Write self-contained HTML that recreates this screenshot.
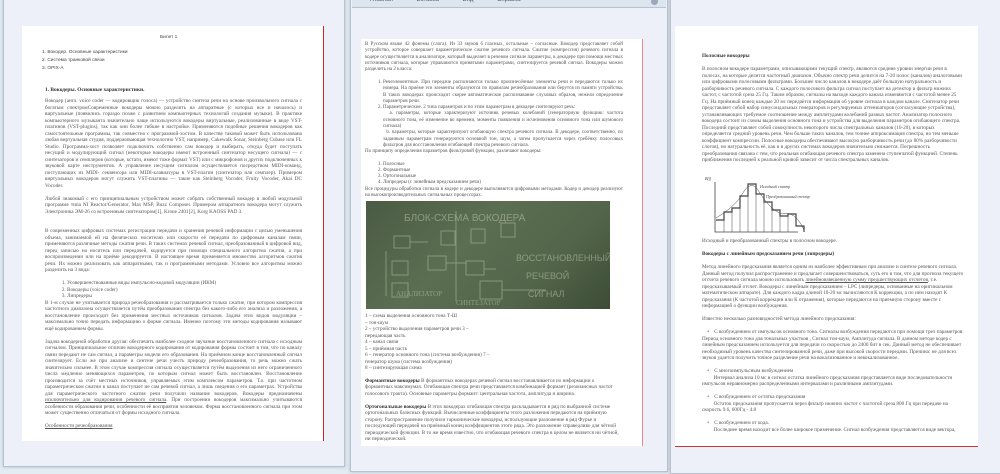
<!DOCTYPE html>
<html><head><meta charset="utf-8">
<style>
*{margin:0;padding:0;box-sizing:border-box}
body{width:1000px;height:470px;overflow:hidden;background:#e3ebf3;position:relative;font-family:"Liberation Serif","Noto Serif CJK SC",serif;color:#555}
.win{position:absolute;background:#edf0f8;border:1px solid #b9c3cf;box-shadow:0 0 3px rgba(120,140,160,.5)}
.page{position:absolute;background:#fff}
.t{position:absolute;font-size:5.2px;line-height:6.5px;text-align:justify;color:#555}
.t p{margin-bottom:6.5px}
.s{font-family:"Liberation Sans",sans-serif;font-size:4.8px;line-height:8px;color:#444}
b{color:#333}
ol,ul{padding-left:14px}
</style></head><body>

<!-- left window -->
<div class="win" style="left:3px;top:-4px;width:342px;height:471px"></div>
<div class="page" style="left:22px;top:26px;width:302px;height:415px;border-right:1.5px solid #c22"></div>
<div class="t s" style="left:160px;top:34px">Билет 1</div>
<div class="t s" style="left:42px;top:49px">1. Вокодер. Основные характеристики<br>2. Система транковой связи<br>3. OPIX-A</div>
<div class="t" style="left:45px;top:87px;font-weight:bold;color:#333;font-size:5.4px">1. Вокодеры. Основные характеристики.</div>
<div class="t" style="left:45px;top:98px;width:257px">
<p>Вокодер (англ. voice coder — кодировщик голоса) — устройство синтеза речи на основе произвольного сигнала с богатым спектромСовременные вокодеры можно разделить на аппаратные (с которых все и началось) и виртуальные (появились гораздо позже с развитием компьютерных технологий создания музыки). В практике компьютерного музыканта значительно чаще используются вокодеры виртуальные, реализованные в виде VST-плагинов (VST-plugins), так как они более гибкие в настройке. Применяются подобные решения вокодеров как самостоятельные программы, так совместно с программой-хостом. В качестве таковой может быть использована любая виртуальная студия, поддерживающая технологию VST, например, Cakewalk Sonar, Steinberg Cubase или FL Studio. Программа-хост позволяет подключить собственно сам вокодер и выбирать, откуда будет поступать несущий и модулирующий сигнал (некоторые вокодеры имеют встроенный синтезатор несущего сигнала) — с синтезаторов и семплеров (которые, кстати, имеют тоже формат VST) или с микрофонов и других подключенных к звуковой карте инструментов. А управление несущим сигналом осуществляется посредством MIDI-команд, поступающих из MIDI- секвенсора или MIDI-клавиатуры в VST-плагин (синтезатор или семплер). Примером виртуальных вокодеров могут служить VST-плагины — такие как Steinberg Vocoder, Fruity Vocoder, Akai DC Vocoder.</p>
<p>Любой знакомый с его принципиальным устройством может собрать собственный вокодер в любой модульной программе типа NI Reactor/Generator, Max MSP, Buzz Composer. Примером аппаратного вокодера могут служить Электроника ЭМ-26 со встроенным синтезатором[1], Krone 2401[2], Korg KAOSS PAD 3.</p>
<p style="margin-top:13px">В современных цифровых системах регистрации передачи и хранения речевой информации с целью уменьшения объема, занимаемой ей на физических носителях или скорости её передачи по цифровым каналам связи, применяются различные методы сжатия речи. В таких системах речевой сигнал, преобразованный в цифровой вид, перед записью на носитель или передачей, кодируется при помощи специального алгоритма сжатия, а при воспроизведении или на приёме декодируется. В настоящее время применяется множество алгоритмов сжатия речи. Их можно реализовать как аппаратными, так и программными методами. Условно все алгоритмы можно разделить на 3 вида:</p>
<ol style="padding-left:22px;margin-bottom:0"><li>Усовершенствованные виды импульсно-кодовой модуляции (ИКМ)</li><li>Вокодеры (voice coder)</li><li>Липредеры</li></ol>
<p>В 1-м случае не учитывается природа речеобразования и рассматривается только сжатие, при котором компрессия частотного диапазона осуществляется путём преобразования спектра без какого-либо его анализа и разложения, а восстановление происходит без применения местных источников сигналов. Задача этих видов модуляции – максимально точно передать информацию о форме сигнала. Именно поэтому эти методы кодирования называют ещё кодированием формы.</p>
<p>Задача вокодерной обработки другая: обеспечить наиболее сходное звучание восстановленного сигнала с исходным сигналом. Принципиальное отличие вокодерного кодирования от кодирования формы состоит в том, что по каналу связи передают не сам сигнал, а параметры модели его образования. На приёмном конце восстановленный сигнал синтезирует. Если же при анализе и синтезе речи учесть природу речеобразования, то речь можно сжать значительно сильнее. В этом случае компрессия сигнала осуществляется путём выделения из него ограниченного числа медленно меняющихся параметров, по которым сигнал может быть восстановлен. Восстановление производится за счёт местных источников, управляемых этим комплексом параметров. Т.о. при частотном параметрическом сжатии в канал поступает не сам речевой сигнал, а лишь сведения о его параметрах. Устройства для параметрического частотного сжатия речи получили название вокодеров. Вокодеры предназначены <u>исключительно для кодирования речевого сигнала</u>. При построении вокодеров максимально учитываются особенности образования речи, особенности её восприятия человеком. Форма восстановленного сигнала при этом может существенно отличаться от формы исходного сигнала.</p>
<p><u>Особенности речеобразования</u></p>
</div>

<!-- middle window -->
<div class="win" style="left:350px;top:-6px;width:318px;height:478px;background:#edf0f8"></div>
<div style="position:absolute;left:352px;top:-6px;width:314px;height:14px;background:#dde5ef;border-bottom:1px solid #b9c3cf"></div>
<div class="s" style="position:absolute;left:370px;top:-4px;font-size:6px;color:#556;word-spacing:22px">Главная Вставка Вид Справка</div>
<div style="position:absolute;left:651px;top:-2px;width:7px;height:7px;border-radius:50%;background:#9aa8b8"></div>
<div class="page" style="left:361px;top:39px;width:282px;height:407px;border-right:1.5px solid #e88"></div>
<div class="t" style="left:365px;top:42px;width:258px;font-size:5px;line-height:6.3px">
<p>В Русском языке 42 фонемы (слога). Из 33 звуков 6 гласных, остальные – согласные. Вокодер представляет собой устройство, которое совершает параметрическое сжатие речевого сигнала. Сжатие (компрессия) речевого сигнала в кодере осуществляется в анализаторе, который выделяет в речевом сигнале параметры, в декодере при помощи местных источников сигнала, которые управляются принятыми параметрами, синтезируется речевой сигнал. Вокодеры можно разделить на 2 класса:</p>
<ol style="padding-left:18px;margin-bottom:0"><li>Речеэлементные. При передаче распознаются только произнесённые элементы речи и передаются только их номера. На приёме эти элементы образуются по правилам речеобразования или берутся из памяти устройства. В таких вокодерах происходит скорее автоматическое распознавание слуховых образов, нежели определение параметров речи.</li><li>Параметрические. 2 типа параметров и по этим параметрам в декодере синтезируют речь:<br>&nbsp;&nbsp;a. параметры, которые характеризуют источник речевых колебаний (генераторную функцию: частота основного тона, её изменение во времени, моменты появления и исчезновения основного тона или шумового сигнала)<br>&nbsp;&nbsp;b. параметры, которые характеризуют огибающую спектра речевого сигнала. В декодере, соответственно, по заданным параметрам генерируются основной тон, шум, а затем пропускается через гребёнку полосовых фильтров для восстановления огибающей спектра речевого сигнала.</li></ol>
По принципу определения параметров фильтровой функции, различают вокодеры:
<ol style="padding-left:18px;margin-top:6px"><li>Полосные</li><li>Формантные</li><li>Ортогональные</li><li>Липредеры (с линейным предсказанием речи)</li></ol>
Все процедуры обработки сигнала в кодере и декодере выполняются цифровыми методами. Кодер и декодер реализуют на высокопроизводительных сигнальных процессорах.
</div>
<div style="position:absolute;left:366px;top:201px;width:244px;height:108px;background:linear-gradient(135deg,#4a5b43,#5b6e52 40%,#53654a 70%,#3c4c36);overflow:hidden">
<svg width="244" height="108" style="position:absolute;left:0;top:0" stroke="#a9b69a" fill="none" stroke-width="1" opacity=".6">
<text x="38" y="20" fill="#b4bfa4" stroke="none" font-size="10" font-family="Liberation Sans">БЛОК-СХЕМА ВОКОДЕРА</text>
<rect x="28" y="35" width="16" height="12"/><rect x="75" y="30" width="14" height="14"/><rect x="105" y="28" width="14" height="14"/><rect x="135" y="22" width="14" height="14"/>
<rect x="26" y="60" width="16" height="14"/><rect x="62" y="55" width="18" height="14"/><rect x="26" y="82" width="16" height="14"/>
<rect x="100" y="60" width="18" height="14"/><rect x="114" y="80" width="22" height="18"/>
<path d="M90 10 V100 M44 41 H62 M80 62 H100 M118 68 H130 M136 89 H180 M20 50 V95"/>
<text x="150" y="60" fill="#b4bfa4" stroke="none" font-size="9" font-family="Liberation Sans">ВОССТАНОВЛЕННЫЙ</text>
<text x="160" y="78" fill="#b4bfa4" stroke="none" font-size="9" font-family="Liberation Sans">РЕЧЕВОЙ</text>
<text x="162" y="96" fill="#b4bfa4" stroke="none" font-size="9" font-family="Liberation Sans">СИГНАЛ</text>
<text x="30" y="95" fill="#b4bfa4" stroke="none" font-size="7">АНАЛИЗАТОР</text><text x="90" y="104" fill="#b4bfa4" stroke="none" font-size="7">СИНТЕЗАТОР</text>
</svg></div>
<div class="t" style="left:365px;top:313px;width:258px;text-align:left">
1 – схема выделения основного тона Т-Ш<br>– тон-шум<br>2 – устройство выделения параметров речи 3 –<br>передающая часть<br>4 – канал связи<br>5 – приёмная часть<br>6 – генератор основного тона (система возбуждения) 7 –<br>генератор шума (система возбуждения)<br>8 – синтезирующая схема
<p style="margin-top:6px"><b>Формантные вокодеры</b> В формантных вокодерах речевой сигнал восстанавливается по информации о формантных максимумах. Огибающая спектра речи представляется комбинацией формант (резонансных частот голосового тракта). Основные параметры формант: центральная частота, амплитуда и ширина.</p>
<p><b>Ортогональные вокодеры</b> В этих вокодерах огибающая спектра раскладывается в ряд по выбранной системе ортогональных базисных функций. Вычисленные коэффициенты этого разложения передаются на приёмную сторону. Распространение получили гармонические вокодеры, использующие разложение в ряд Фурье и последующей передачей на приёмный конец коэффициентов этого ряда. Это разложение справедливо для чётной периодической функции. В то же время известно, что огибающая речевого спектра в целом не является ни чётной, ни периодической.</p>
</div>

<!-- right window -->
<div class="win" style="left:670px;top:-4px;width:340px;height:478px"></div>
<div class="page" style="left:675px;top:26px;width:303px;height:421px;border-bottom:1.5px solid #c33"></div>
<div class="t" style="left:702px;top:53px;width:262px">
<p style="font-weight:bold;color:#333">Полосные вокодеры</p>
<p style="text-align:left">В полосном вокодере параметрами, описывающими текущий спектр, являются средние уровни энергии речи в полосах, на которые делится частотный диапазон. Обычно спектр речи делится на 7-20 полос (каналов) аналоговыми или цифровыми полосовыми фильтрами. Большее число каналов в вокодере даёт большую натуральность и разборчивость речевого сигнала. С каждого полосового фильтра сигнал поступает на детектор и фильтр нижних частот, с частотой среза 25 Гц. Таким образом, сигналы на выходе каждого канала изменяются с частотой менее 25 Гц. На приёмный конец каждые 20 мс передаётся информация об уровне сигнала в каждом канале. Синтезатор речи представляет собой набор синусоидальных генераторов и регулируемых аттенюаторов (согласующие устройства), устанавливающих требуемое соотношение между амплитудами колебаний разных частот. Анализатор полосного вокодера состоит из схемы выделения основного тона и устройства для выделения параметров огибающего спектра. Последний представляет собой совокупность некоторого числа спектральных каналов (10-20), в которых определяется средний уровень речи. Чем больше таких каналов, тем точнее аппроксимация спектра, но тем меньше коэффициент компрессии. Полосные вокодеры обеспечивают высокую разборчивость речи (до 80% разборчивости слогов), но натуральность её, как и в других системах вокодеров значительно снижается. Погрешность преобразования связана с тем, что реальная огибающая речевого спектра заменена ступенчатой функцией. Степень приближения последней к реальной кривой зависит от числа спектральных каналов.</p>
</div>
<svg style="position:absolute;left:700px;top:174px" width="110" height="62" fill="none" stroke="#444" stroke-width="0.8">
<text x="5" y="6" font-size="4" fill="#444" stroke="none" font-style="italic">B(f)</text>
<path d="M15 8 V58 H98"/>
<path d="M16 46 H24 V38 H32 V34 H40 V22 H48 V10 H56 V20 H64 V28 H72 V36 H80 V42 H88 V40 H96 V52 H104 V58" stroke-width="1.2"/>
<path d="M24 46 V58 M32 38 V58 M40 34 V58 M48 22 V58 M56 10 V58 M64 20 V58 M72 28 V58 M80 36 V58 M88 40 V58" stroke-width=".5"/>
<path d="M16 44 Q30 36 40 24 Q50 4 58 16 Q70 36 82 40 Q95 36 104 56" stroke-width=".5"/>
<text x="60" y="14" font-size="4" fill="#444" stroke="none" font-style="italic">Исходный спектр</text>
<text x="66" y="24" font-size="4" fill="#444" stroke="none" font-style="italic">Преобразованный спектр</text>
</svg>
<div class="t" style="left:702px;top:238px;width:262px;text-align:left">
<p>Исходный и преобразованный спектры в полосном вокодере.</p>
<p style="font-weight:bold;color:#333">Вокодеры с линейным предсказанием речи (липредеры)</p>
<p>Метод линейного предсказания является одним из наиболее эффективным при анализе и синтезе речевого сигнала. Данный метод получил распространение и предлагает совершенствоваться, суть его в том, что для прогноза текущего отсчета речевого сигнала можно использовать <u>линейновзвешенную сумму предшествующих отсчетов</u>, т.е. предсказываемый отсчет. Вокодеры с линейным предсказанием – LPC (липредеры, основанные на оригинальном математическом аппарате). Для каждого кадра длиной 10-20 мс вычисляются К коррекции, а по ним находят К предсказания (К частотой коррекции или К отражения), которые передаются на приемную сторону вместе с информацией о функции возбуждения.</p>
<p>Известно несколько разновидностей метода линейного предсказания:</p>
<p>&nbsp;&nbsp;&nbsp;&nbsp;•&nbsp;&nbsp;&nbsp; С возбуждением от импульсов основного тона. Сигналы возбуждения передаются при помощи трех параметров: Период основного тона для тональных участков , Сигнал тон-шум, Амплитуда сигнала. В данном методе кодер с линейным предсказанием используется для передачи со скоростью до 2400 бит в сек. Данный метод не обеспечивает необходимый уровень качества синтезированной речи, даже при высокой скорости передачи. Причина: не для всех звуков удается получить точное разделение речи на вокализованное и невокализованное.</p>
<p>&nbsp;&nbsp;&nbsp;&nbsp;•&nbsp;&nbsp;&nbsp; С многоимпульсным возбуждением<br>&nbsp;&nbsp;&nbsp;&nbsp;&nbsp;&nbsp;&nbsp;&nbsp;&nbsp;Интервал анализа 10 мс в сигнал остатка линейного предсказания представляется виде последовательности импульсов неравномерно распределенными интервалами и различными амплитудами.</p>
<p>&nbsp;&nbsp;&nbsp;&nbsp;•&nbsp;&nbsp;&nbsp; С возбуждением от остатка предсказания<br>&nbsp;&nbsp;&nbsp;&nbsp;&nbsp;&nbsp;&nbsp;&nbsp;&nbsp;Остаток предсказания пропускается через фильтр нижних частот с частотой среза 800 Гц при передаче на скорость 9.6, 600Гц - 4.8</p>
<p style="height:13px;overflow:hidden">&nbsp;&nbsp;&nbsp;&nbsp;•&nbsp;&nbsp;&nbsp; С возбуждением от кода.<br>&nbsp;&nbsp;&nbsp;&nbsp;&nbsp;&nbsp;&nbsp;&nbsp;&nbsp;Последнее время находит все более широкое применение. Сигнал возбуждения представляется виде вектора, которому присваивается порядковый индекс. Такие вокодеры имеют на приемнике передающих концах</p>
</div>
</body></html>
